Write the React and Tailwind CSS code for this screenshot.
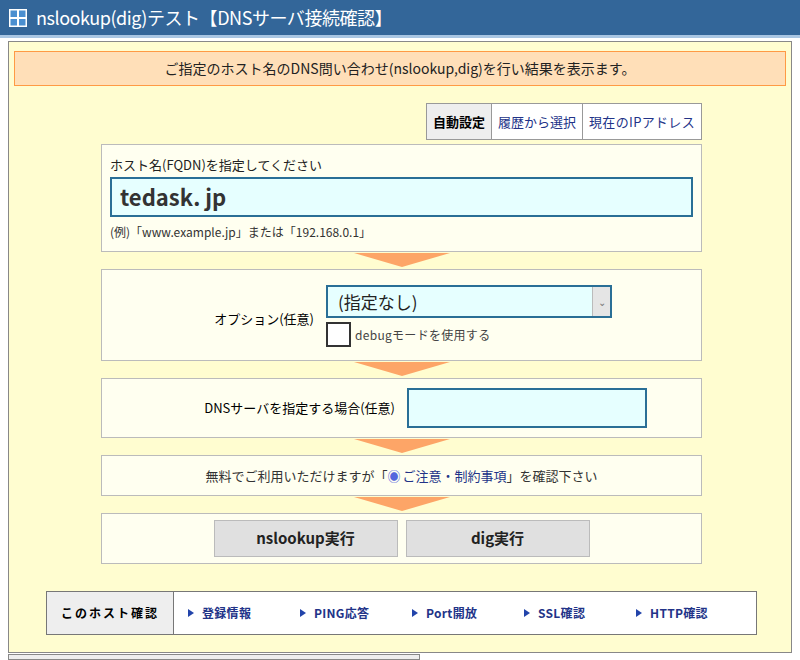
import React from 'react';

const font = { fontFamily: '"Noto Sans CJK JP", "Liberation Sans", sans-serif' };

function Arrow() {
  return (
    <div className="flex justify-center h-[17px]">
      <div className="w-0 h-0 border-l-[48px] border-r-[48px] border-t-[14px] border-l-transparent border-r-transparent border-t-[#fda567] mt-[1px]" />
    </div>
  );
}

function Tri() {
  return <span className="inline-block w-0 h-0 border-t-[4px] border-b-[4px] border-l-[6px] border-t-transparent border-b-transparent border-l-[#2244aa] mr-2" />;
}

export default function App() {
  return (
    <div className="w-[800px] h-[660px] bg-white overflow-hidden" style={font}>
      <div className="h-[38px] bg-[#336699] flex items-center px-2 border-b-[3px] border-[#a9c6e3]">
        <svg width="20" height="20" viewBox="0 0 20 20" className="mr-2">
          <rect x="1" y="1" width="18" height="18" fill="#fff" />
          <rect x="2.5" y="2.5" width="6.5" height="6.5" fill="#4a8fd0" />
          <rect x="11" y="2.5" width="6.5" height="6.5" fill="#4a8fd0" />
          <rect x="2.5" y="11" width="6.5" height="6.5" fill="#4a8fd0" />
          <rect x="11" y="11" width="6.5" height="6.5" fill="#4a8fd0" />
        </svg>
        <span className="text-white text-[18px] tracking-tight">nslookup(dig)テスト【DNSサーバ接続確認】</span>
      </div>
      <div className="mx-[8px] mt-[3px] h-[612px] bg-[#fffdd0] border border-[#888] px-[5px] pt-[9px]">
        <div className="h-[35px] bg-[#ffdfb8] border border-[#ff9a44] flex items-center justify-center text-[14px] text-[#222]">
          ご指定のホスト名のDNS問い合わせ(nslookup,dig)を行い結果を表示ます。
        </div>
        <div className="w-[601px] ml-[87px]">
          <div className="flex justify-end mt-[17px]">
            <div className="flex border border-[#999] bg-white text-[13px] h-[37px]">
              <div className="px-[6px] flex items-center bg-[#eee] border-r border-[#999] font-bold">自動設定</div>
              <div className="px-[6px] flex items-center text-[#223388] border-r border-[#999]">履歴から選択</div>
              <div className="px-[6px] flex items-center text-[#223388] tracking-wide">現在のIPアドレス</div>
            </div>
          </div>
          <div className="mt-[4px] bg-[#fffff0] border border-[#bbb] h-[108px] px-[8px] pt-[10px]">
            <div className="text-[13px] text-[#222]">ホスト名(FQDN)を指定してください</div>
            <div className="mt-[2px] h-[40px] bg-[#e6ffff] border-2 border-[#2a6f96] flex items-center px-[8px] text-[22px] text-[#333] font-bold">tedask. jp</div>
            <div className="text-[12px] text-[#333] mt-[6px]">(例)「www.example.jp」または「192.168.0.1」</div>
          </div>
          <Arrow />
          <div className="bg-[#fffff0] border border-[#bbb] h-[92px] flex items-center">
            <div className="w-[224px] text-right text-[13px] pr-[12px] mt-[8px]">オプション(任意)</div>
            <div className="pt-[2px]">
              <div className="w-[286px] h-[33px] bg-[#e6ffff] border-2 border-[#2a6f96] flex items-center pl-[10px] text-[17px] text-[#222] relative">
                (指定なし)
                <div className="absolute right-0 top-0 h-full w-[18px] bg-[#e5e5e5] border-l border-[#bbb] flex items-center justify-center text-[10px] text-[#777]">⌄</div>
              </div>
              <div className="flex items-center mt-[4px]">
                <div className="w-[25px] h-[25px] bg-white border-2 border-[#333] mr-[4px]" />
                <span className="text-[12px] text-[#444] tracking-wide">debugモードを使用する</span>
              </div>
            </div>
          </div>
          <Arrow />
          <div className="bg-[#fffff0] border border-[#bbb] h-[60px] flex items-center">
            <div className="w-[305px] text-right text-[13px] pr-[12px]">DNSサーバを指定する場合(任意)</div>
            <div className="w-[240px] h-[40px] bg-[#e6ffff] border-2 border-[#2a6f96]" />
          </div>
          <Arrow />
          <div className="bg-[#fffff0] border border-[#bbb] h-[41px] flex items-center justify-center text-[13px] text-[#333]">
            無料でご利用いただけますが「<span className="text-[#5566dd] mr-[2px]">◉</span><span className="text-[#223388]">ご注意・制約事項</span>」を確認下さい
          </div>
          <Arrow />
          <div className="bg-[#fffff0] border border-[#bbb] h-[51px] flex items-center justify-center gap-[8px]">
            <div className="w-[184px] h-[37px] bg-[#e0e0e0] border border-[#bbb] flex items-center justify-center font-bold text-[15px] text-[#222]">nslookup実行</div>
            <div className="w-[184px] h-[37px] bg-[#e0e0e0] border border-[#bbb] flex items-center justify-center font-bold text-[15px] text-[#222]">dig実行</div>
          </div>
        </div>
        <div className="ml-[32px] mt-[27px] w-[711px] h-[44px] flex border border-[#777] bg-white text-[12px]">
          <div className="w-[127px] bg-[#eee] border-r border-[#777] flex items-center justify-center font-bold tracking-[2px]">このホスト確認</div>
          <div className="flex items-center text-[#223388] font-bold tracking-wide">
            <span className="ml-[14px] w-[112px] flex items-center"><Tri />登録情報</span>
            <span className="w-[112px] flex items-center"><Tri />PING応答</span>
            <span className="w-[112px] flex items-center"><Tri />Port開放</span>
            <span className="w-[112px] flex items-center"><Tri />SSL確認</span>
            <span className="flex items-center"><Tri />HTTP確認</span>
          </div>
        </div>
      </div>
      <div className="ml-[8px] mt-[1px] w-[412px] h-[6px] border border-[#888] bg-[#eee]" />
    </div>
  );
}
